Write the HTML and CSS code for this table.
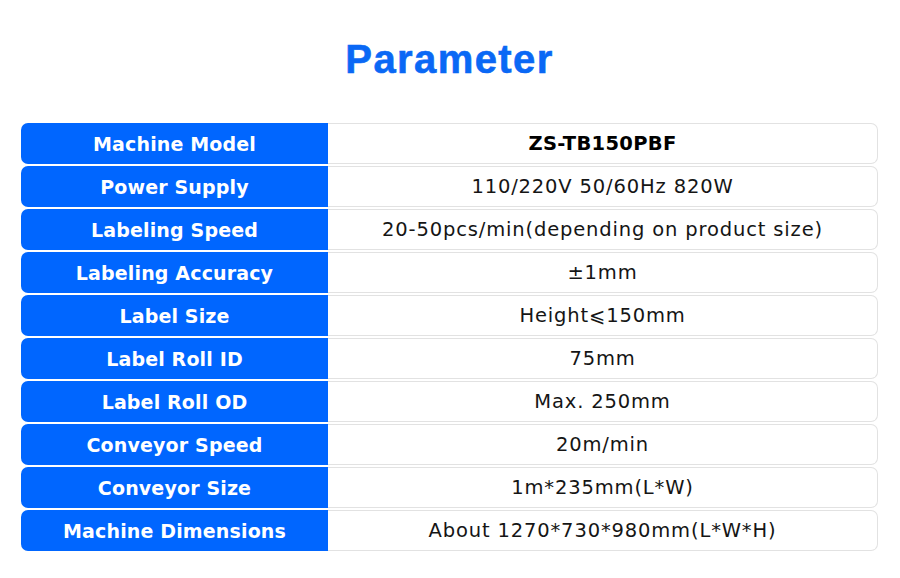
FILE: index.html
```html
<!DOCTYPE html>
<html lang="en">
<head>
<meta charset="utf-8">
<title>Parameter</title>
<link rel="stylesheet" href="styles.css">
</head>
<body>
<div class="page">
  <h1 class="title">Parameter</h1>
  <div class="table">
    <div class="row"><div class="label">Machine Model</div><div class="value strong">ZS-TB150PBF</div></div>
    <div class="row"><div class="label">Power Supply</div><div class="value">110/220V 50/60Hz 820W</div></div>
    <div class="row"><div class="label">Labeling Speed</div><div class="value">20-50pcs/min(depending on product size)</div></div>
    <div class="row"><div class="label">Labeling Accuracy</div><div class="value">±1mm</div></div>
    <div class="row"><div class="label">Label Size</div><div class="value">Height⩽150mm</div></div>
    <div class="row"><div class="label">Label Roll ID</div><div class="value">75mm</div></div>
    <div class="row"><div class="label">Label Roll OD</div><div class="value">Max. 250mm</div></div>
    <div class="row"><div class="label">Conveyor Speed</div><div class="value">20m/min</div></div>
    <div class="row"><div class="label">Conveyor Size</div><div class="value">1m*235mm(L*W)</div></div>
    <div class="row"><div class="label">Machine Dimensions</div><div class="value">About 1270*730*980mm(L*W*H)</div></div>
  </div>
</div>
</body>
</html>
```
FILE: styles.css
```css
html, body {
  margin: 0;
  padding: 0;
  background: #ffffff;
}
.page {
  width: 900px;
  height: 578px;
  padding: 35px 22px 0 21px;
  box-sizing: border-box;
}
.title {
  margin: 0 0 40px 0;
  height: 48px;
  line-height: 48px;
  text-align: center;
  font-family: "Liberation Sans", Arial, sans-serif;
  font-weight: bold;
  font-size: 40px;
  letter-spacing: 1.4px;
  color: #0a68f5;
  -webkit-text-stroke: 0.6px #0a68f5;
}
.table {
  display: flex;
  flex-direction: column;
  gap: 2px;
}
.row {
  display: grid;
  grid-template-columns: 307px 1fr;
  height: 41px;
}
.label {
  background: #0066ff;
  color: #ffffff;
  border-radius: 7px 0 0 7px;
  display: flex;
  align-items: center;
  justify-content: center;
  font-family: "DejaVu Sans", Verdana, sans-serif;
  font-weight: bold;
  font-size: 19px;
  letter-spacing: 0.15px;
}
.value {
  border: 1px solid #e2e2e2;
  border-left: none;
  border-radius: 0 7px 7px 0;
  display: flex;
  align-items: center;
  justify-content: center;
  font-family: "DejaVu Sans", Verdana, sans-serif;
  font-size: 19.5px;
  letter-spacing: 0.85px;
  color: #151515;
}
.value.strong {
  font-weight: bold;
  color: #000000;
  letter-spacing: 0.3px;
}
```
